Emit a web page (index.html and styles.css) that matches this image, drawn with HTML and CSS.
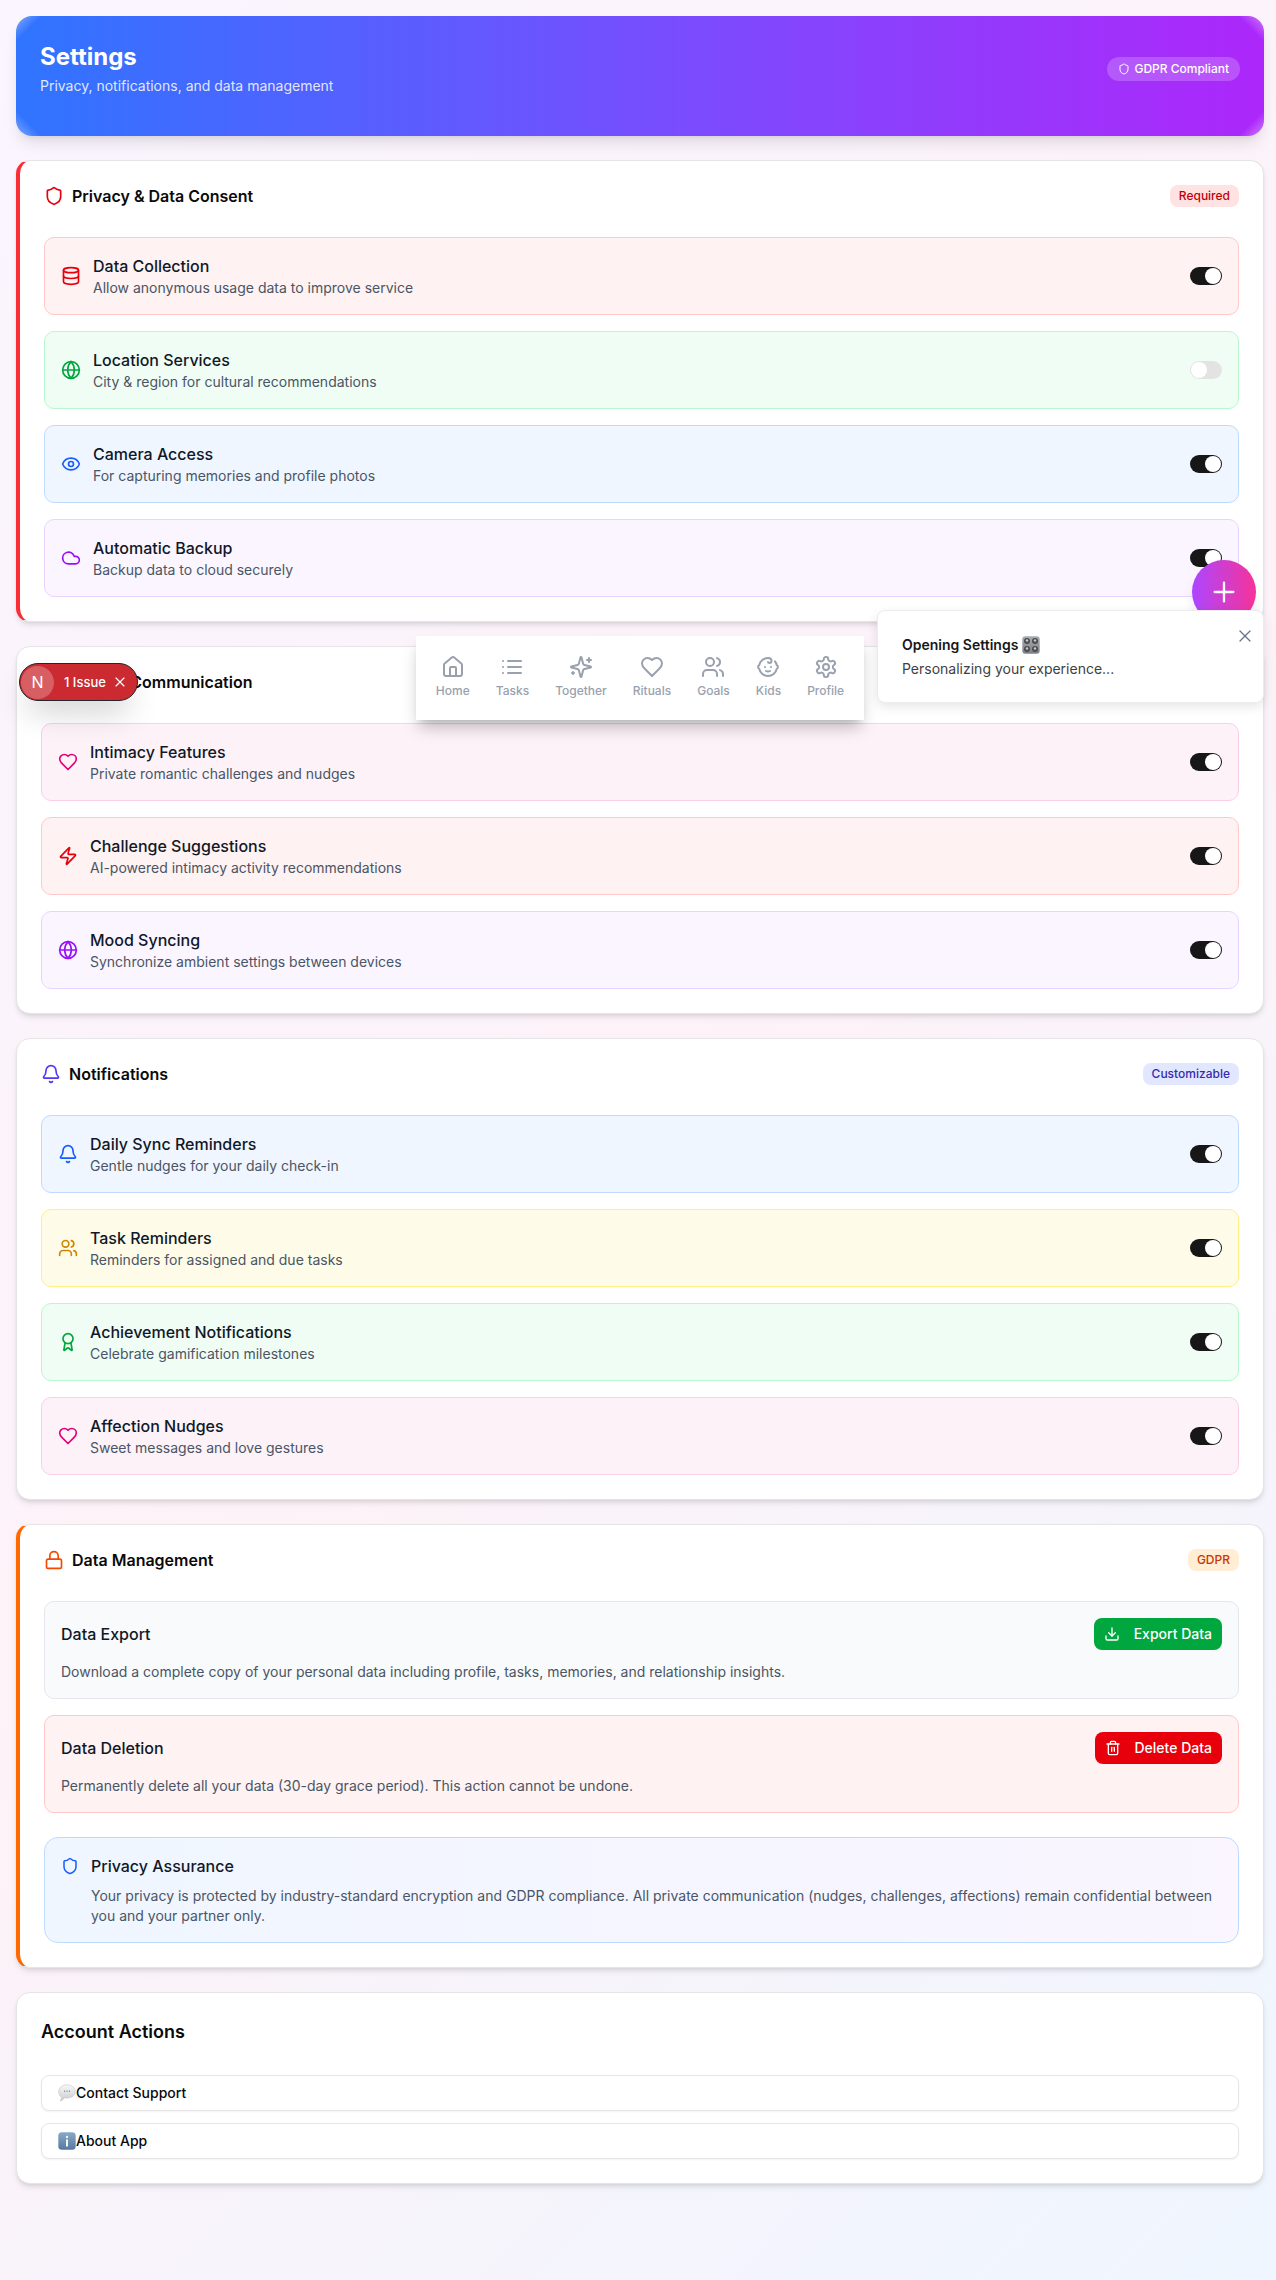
FILE: index.html
```html
<!DOCTYPE html>
<html lang="en">
  <head>
    <meta charset="UTF-8" />
    <meta name="viewport" content="width=device-width, initial-scale=1.0" />
    <title>Settings</title>
    <link rel="stylesheet" href="styles.css">
  </head>
  <body>
    <svg class="sprite" aria-hidden="true">
      <symbol id="i-shield" viewBox="0 0 24 24"><path d="M20 13c0 5-3.5 7.5-7.66 8.95a1 1 0 0 1-.67-.01C7.5 20.5 4 18 4 13V6a1 1 0 0 1 1-1c2 0 4.5-1.2 6.24-2.72a1.17 1.17 0 0 1 1.52 0C14.51 3.81 17 5 19 5a1 1 0 0 1 1 1z"/></symbol>
      <symbol id="i-database" viewBox="0 0 24 24"><ellipse cx="12" cy="5" rx="9" ry="3"/><path d="M3 5V19A9 3 0 0 0 21 19V5"/><path d="M3 12A9 3 0 0 0 21 12"/></symbol>
      <symbol id="i-globe" viewBox="0 0 24 24"><circle cx="12" cy="12" r="10"/><path d="M12 2a14.5 14.5 0 0 0 0 20 14.5 14.5 0 0 0 0-20"/><path d="M2 12h20"/></symbol>
      <symbol id="i-eye" viewBox="0 0 24 24"><path d="M2.062 12.348a1 1 0 0 1 0-.696 10.75 10.75 0 0 1 19.876 0 1 1 0 0 1 0 .696 10.75 10.75 0 0 1-19.876 0"/><circle cx="12" cy="12" r="3"/></symbol>
      <symbol id="i-cloud" viewBox="0 0 24 24"><path d="M17.5 19H9a7 7 0 1 1 6.71-9h1.79a4.5 4.5 0 1 1 0 9Z"/></symbol>
      <symbol id="i-heart" viewBox="0 0 24 24"><path d="M19 14c1.49-1.46 3-3.21 3-5.5A5.5 5.5 0 0 0 16.5 3c-1.76 0-3 .5-4.5 2-1.5-1.5-2.74-2-4.5-2A5.5 5.5 0 0 0 2 8.5c0 2.3 1.5 4.05 3 5.5l7 7Z"/></symbol>
      <symbol id="i-zap" viewBox="0 0 24 24"><path d="M4 14a1 1 0 0 1-.78-1.63l9.9-10.2a.5.5 0 0 1 .86.46l-1.92 6.02A1 1 0 0 0 13 10h7a1 1 0 0 1 .78 1.63l-9.9 10.2a.5.5 0 0 1-.86-.46l1.92-6.02A1 1 0 0 0 11 14z"/></symbol>
      <symbol id="i-bell" viewBox="0 0 24 24"><path d="M10.268 21a2 2 0 0 0 3.464 0"/><path d="M3.262 15.326A1 1 0 0 0 4 17h16a1 1 0 0 0 .74-1.673C19.41 13.956 18 12.499 18 8A6 6 0 0 0 6 8c0 4.499-1.411 5.956-2.738 7.326"/></symbol>
      <symbol id="i-users" viewBox="0 0 24 24"><path d="M16 21v-2a4 4 0 0 0-4-4H6a4 4 0 0 0-4 4v2"/><circle cx="9" cy="7" r="4"/><path d="M22 21v-2a4 4 0 0 0-3-3.87"/><path d="M16 3.13a4 4 0 0 1 0 7.75"/></symbol>
      <symbol id="i-award" viewBox="0 0 24 24"><path d="m15.477 12.89 1.515 8.526a.5.5 0 0 1-.81.47l-3.58-2.687a1 1 0 0 0-1.197 0l-3.586 2.686a.5.5 0 0 1-.81-.469l1.514-8.526"/><circle cx="12" cy="8" r="6"/></symbol>
      <symbol id="i-lock" viewBox="0 0 24 24"><rect width="18" height="11" x="3" y="11" rx="2" ry="2"/><path d="M7 11V7a5 5 0 0 1 10 0v4"/></symbol>
      <symbol id="i-download" viewBox="0 0 24 24"><path d="M21 15v4a2 2 0 0 1-2 2H5a2 2 0 0 1-2-2v-4"/><path d="m7 10 5 5 5-5"/><path d="M12 15V3"/></symbol>
      <symbol id="i-trash" viewBox="0 0 24 24"><path d="M3 6h18"/><path d="M19 6v14c0 1-1 2-2 2H7c-1 0-2-1-2-2V6"/><path d="M8 6V4c0-1 1-2 2-2h4c1 0 2 1 2 2v2"/><path d="M10 11v6"/><path d="M14 11v6"/></symbol>
      <symbol id="i-home" viewBox="0 0 24 24"><path d="M15 21v-8a1 1 0 0 0-1-1h-4a1 1 0 0 0-1 1v8"/><path d="M3 10a2 2 0 0 1 .709-1.528l7-5.999a2 2 0 0 1 2.582 0l7 5.999A2 2 0 0 1 21 10v9a2 2 0 0 1-2 2H5a2 2 0 0 1-2-2z"/></symbol>
      <symbol id="i-list" viewBox="0 0 24 24"><path d="M3 12h.01"/><path d="M3 18h.01"/><path d="M3 6h.01"/><path d="M8 12h13"/><path d="M8 18h13"/><path d="M8 6h13"/></symbol>
      <symbol id="i-sparkles" viewBox="0 0 24 24"><path d="M9.937 15.5A2 2 0 0 0 8.5 14.063l-6.135-1.582a.5.5 0 0 1 0-.962L8.5 9.936A2 2 0 0 0 9.937 8.5l1.582-6.135a.5.5 0 0 1 .963 0L14.063 8.5A2 2 0 0 0 15.5 9.937l6.135 1.581a.5.5 0 0 1 0 .964L15.5 14.063a2 2 0 0 0-1.437 1.437l-1.582 6.135a.5.5 0 0 1-.963 0z"/><path d="M20 3v4"/><path d="M22 5h-4"/><path d="M4 17v2"/><path d="M5 18H3"/></symbol>
      <symbol id="i-baby" viewBox="0 0 24 24"><path d="M9 12h.01"/><path d="M15 12h.01"/><path d="M10 16c.5.3 1.2.5 2 .5s1.5-.2 2-.5"/><path d="M19 6.3a9 9 0 0 1 1.8 3.9 2 2 0 0 1 0 3.6 9 9 0 0 1-17.6 0 2 2 0 0 1 0-3.6A9 9 0 0 1 12 3c2 0 3.5 1.1 3.5 2.5s-.9 2.5-2 2.5c-.8 0-1.5-.4-1.5-1"/></symbol>
      <symbol id="i-settings" viewBox="0 0 24 24"><path d="M12.22 2h-.44a2 2 0 0 0-2 2v.18a2 2 0 0 1-1 1.73l-.43.25a2 2 0 0 1-2 0l-.15-.08a2 2 0 0 0-2.73.73l-.22.38a2 2 0 0 0 .73 2.73l.15.1a2 2 0 0 1 1 1.72v.51a2 2 0 0 1-1 1.74l-.15.09a2 2 0 0 0-.73 2.73l.22.38a2 2 0 0 0 2.73.73l.15-.08a2 2 0 0 1 2 0l.43.25a2 2 0 0 1 1 1.73V20a2 2 0 0 0 2 2h.44a2 2 0 0 0 2-2v-.18a2 2 0 0 1 1-1.73l.43-.25a2 2 0 0 1 2 0l.15.08a2 2 0 0 0 2.73-.73l.22-.39a2 2 0 0 0-.73-2.73l-.15-.08a2 2 0 0 1-1-1.74v-.5a2 2 0 0 1 1-1.74l.15-.09a2 2 0 0 0 .73-2.73l-.22-.38a2 2 0 0 0-2.73-.73l-.15.08a2 2 0 0 1-2 0l-.43-.25a2 2 0 0 1-1-1.73V4a2 2 0 0 0-2-2z"/><circle cx="12" cy="12" r="3"/></symbol>
      <symbol id="i-x" viewBox="0 0 24 24"><path d="M18 6 6 18"/><path d="m6 6 12 12"/></symbol>
      <symbol id="i-plus" viewBox="0 0 24 24"><path d="M5 12h14"/><path d="M12 5v14"/></symbol>
    </svg>

    <main class="page">
      <header class="hero">
        <div>
          <h1>Settings</h1>
          <p>Privacy, notifications, and data management</p>
        </div>
        <span class="hero-pill"><svg class="icon icon-12"><use href="#i-shield"/></svg>GDPR Compliant</span>
      </header>

      <section class="card card-red">
        <div class="card-head">
          <h2><svg class="icon c-red"><use href="#i-shield"/></svg>Privacy &amp; Data Consent</h2>
          <span class="badge badge-red">Required</span>
        </div>
        <div class="rows">
          <div class="row row-red">
            <svg class="icon c-red"><use href="#i-database"/></svg>
            <div class="row-text"><h3>Data Collection</h3><p>Allow anonymous usage data to improve service</p></div>
            <span class="toggle on"></span>
          </div>
          <div class="row row-green">
            <svg class="icon c-green"><use href="#i-globe"/></svg>
            <div class="row-text"><h3>Location Services</h3><p>City &amp; region for cultural recommendations</p></div>
            <span class="toggle"></span>
          </div>
          <div class="row row-blue">
            <svg class="icon c-blue"><use href="#i-eye"/></svg>
            <div class="row-text"><h3>Camera Access</h3><p>For capturing memories and profile photos</p></div>
            <span class="toggle on"></span>
          </div>
          <div class="row row-purple">
            <svg class="icon c-purple"><use href="#i-cloud"/></svg>
            <div class="row-text"><h3>Automatic Backup</h3><p>Backup data to cloud securely</p></div>
            <span class="toggle on"></span>
          </div>
        </div>
      </section>

      <section class="card">
        <div class="card-head">
          <h2><svg class="icon c-pink"><use href="#i-heart"/></svg>Partner Communication</h2>
        </div>
        <div class="rows">
          <div class="row row-pink">
            <svg class="icon c-pink"><use href="#i-heart"/></svg>
            <div class="row-text"><h3>Intimacy Features</h3><p>Private romantic challenges and nudges</p></div>
            <span class="toggle on"></span>
          </div>
          <div class="row row-red">
            <svg class="icon c-red"><use href="#i-zap"/></svg>
            <div class="row-text"><h3>Challenge Suggestions</h3><p>AI-powered intimacy activity recommendations</p></div>
            <span class="toggle on"></span>
          </div>
          <div class="row row-purple">
            <svg class="icon c-purple"><use href="#i-globe"/></svg>
            <div class="row-text"><h3>Mood Syncing</h3><p>Synchronize ambient settings between devices</p></div>
            <span class="toggle on"></span>
          </div>
        </div>
      </section>

      <section class="card">
        <div class="card-head">
          <h2><svg class="icon c-indigo"><use href="#i-bell"/></svg>Notifications</h2>
          <span class="badge badge-indigo">Customizable</span>
        </div>
        <div class="rows">
          <div class="row row-blue">
            <svg class="icon c-blue"><use href="#i-bell"/></svg>
            <div class="row-text"><h3>Daily Sync Reminders</h3><p>Gentle nudges for your daily check-in</p></div>
            <span class="toggle on"></span>
          </div>
          <div class="row row-yellow">
            <svg class="icon c-yellow"><use href="#i-users"/></svg>
            <div class="row-text"><h3>Task Reminders</h3><p>Reminders for assigned and due tasks</p></div>
            <span class="toggle on"></span>
          </div>
          <div class="row row-green">
            <svg class="icon c-green"><use href="#i-award"/></svg>
            <div class="row-text"><h3>Achievement Notifications</h3><p>Celebrate gamification milestones</p></div>
            <span class="toggle on"></span>
          </div>
          <div class="row row-pink">
            <svg class="icon c-pink"><use href="#i-heart"/></svg>
            <div class="row-text"><h3>Affection Nudges</h3><p>Sweet messages and love gestures</p></div>
            <span class="toggle on"></span>
          </div>
        </div>
      </section>

      <section class="card card-orange">
        <div class="card-head">
          <h2><svg class="icon c-orange"><use href="#i-lock"/></svg>Data Management</h2>
          <span class="badge badge-orange">GDPR</span>
        </div>
        <div class="rows">
          <div class="data-box row-gray">
            <div class="data-top">
              <h3>Data Export</h3>
              <button class="btn btn-green"><svg class="icon icon-16"><use href="#i-download"/></svg>Export Data</button>
            </div>
            <p>Download a complete copy of your personal data including profile, tasks, memories, and relationship insights.</p>
          </div>
          <div class="data-box row-red">
            <div class="data-top">
              <h3>Data Deletion</h3>
              <button class="btn btn-red"><svg class="icon icon-16"><use href="#i-trash"/></svg>Delete Data</button>
            </div>
            <p>Permanently delete all your data (30-day grace period). This action cannot be undone.</p>
          </div>
        </div>
        <div class="assurance">
          <svg class="icon icon-18 c-blue"><use href="#i-shield"/></svg>
          <div>
            <h3>Privacy Assurance</h3>
            <p>Your privacy is protected by industry-standard encryption and GDPR compliance. All private communication (nudges, challenges, affections) remain confidential between you and your partner only.</p>
          </div>
        </div>
      </section>

      <section class="card">
        <h2 class="actions-title">Account Actions</h2>
        <div class="actions">
          <button class="action">
            <svg class="emoji" viewBox="0 0 18 18">
              <defs><linearGradient id="bubble" x1="0" y1="0" x2="0" y2="1"><stop offset="0" stop-color="#f7f8f9"/><stop offset="1" stop-color="#c9ccd0"/></linearGradient></defs>
              <path d="M9 .8c4.600 0 8.300 2.900 8.300 6.600S13.600 14 9 14c-.9 0-1.700-.1-2.500-.3-1 1.600-2.600 2.900-4.400 3.400.9-1.100 1.300-2.400 1.200-4C1.700 11.900.7 9.800.7 7.400.7 3.700 4.400.8 9 .8z" fill="url(#bubble)" stroke="#b5b8bc" stroke-width=".5"/>
              <circle cx="6.600" cy="7.200" r=".6" fill="#6b7075"/><circle cx="9" cy="7.200" r=".6" fill="#6b7075"/><circle cx="11.400" cy="7.200" r=".6" fill="#6b7075"/>
            </svg>Contact Support
          </button>
          <button class="action">
            <svg class="emoji" viewBox="0 0 18 18">
              <defs><linearGradient id="info" x1="0" y1="0" x2="0" y2="1"><stop offset="0" stop-color="#8aa9c9"/><stop offset="1" stop-color="#55799f"/></linearGradient></defs>
              <rect x=".3" y=".3" width="17.400" height="17.400" rx="3.500" fill="url(#info)"/>
              <circle cx="9" cy="5" r="1.200" fill="#f3f6f9"/><rect x="8" y="7.500" width="2" height="7" fill="#f3f6f9"/>
            </svg>About App
          </button>
        </div>
      </section>
    </main>

    <!-- floating things over the page -->
    <div class="dev-badge">
      <span class="dev-logo">N</span>
      <span class="dev-label">1 Issue</span>
      <svg class="icon dev-close"><use href="#i-x"/></svg>
    </div>

    <nav class="dock">
      <a class="dock-item"><svg class="icon icon-24"><use href="#i-home"/></svg>Home</a>
      <a class="dock-item"><svg class="icon icon-24"><use href="#i-list"/></svg>Tasks</a>
      <a class="dock-item"><svg class="icon icon-24"><use href="#i-sparkles"/></svg>Together</a>
      <a class="dock-item"><svg class="icon icon-24"><use href="#i-heart"/></svg>Rituals</a>
      <a class="dock-item"><svg class="icon icon-24"><use href="#i-users"/></svg>Goals</a>
      <a class="dock-item"><svg class="icon icon-24"><use href="#i-baby"/></svg>Kids</a>
      <a class="dock-item"><svg class="icon icon-24"><use href="#i-settings"/></svg>Profile</a>
    </nav>

    <button class="fab"><svg class="icon fab-plus"><use href="#i-plus"/></svg></button>

    <div class="toast">
      <div class="toast-title">Opening Settings
        <svg class="emoji" viewBox="0 0 18 18">
          <defs><linearGradient id="knobs" x1="0" y1="0" x2="0" y2="1"><stop offset="0" stop-color="#a9acaf"/><stop offset="1" stop-color="#7d8084"/></linearGradient></defs>
          <rect x=".3" y=".3" width="17.400" height="17.400" rx="3" fill="url(#knobs)"/>
          <circle cx="5" cy="5" r="3" fill="#4a4d51"/><circle cx="13" cy="5" r="3" fill="#4a4d51"/><circle cx="5" cy="13" r="3" fill="#4a4d51"/><circle cx="13" cy="13" r="3" fill="#4a4d51"/>
          <circle cx="5" cy="4.500" r="1.200" fill="#c7c9cb"/><circle cx="13" cy="4.500" r="1.200" fill="#c7c9cb"/><circle cx="5" cy="12.500" r="1.200" fill="#c7c9cb"/><circle cx="13" cy="12.500" r="1.200" fill="#c7c9cb"/>
        </svg>
      </div>
      <div class="toast-text">Personalizing your experience...</div>
      <svg class="icon toast-close"><use href="#i-x"/></svg>
    </div>
  </body>
</html>
```

FILE: styles.css
```css
* {
  box-sizing: border-box;
}

body {
  margin: 0;
  min-height: 2280px;
  position: relative;
  font-family: Inter, "Liberation Sans", sans-serif;
  color: #0a0a0a;
  background: linear-gradient(135deg, #faf5ff 0%, #fdf2f8 50%, #eff6ff 100%);
}

h1,
h2,
h3,
p {
  margin: 0;
}

.sprite {
  display: none;
}

.icon {
  width: 20px;
  height: 20px;
  flex: none;
  fill: none;
  stroke: currentColor;
  stroke-width: 2;
  stroke-linecap: round;
  stroke-linejoin: round;
}

.icon-12 {
  width: 12px;
  height: 12px;
}

.icon-16 {
  width: 16px;
  height: 16px;
}

.icon-18 {
  width: 18px;
  height: 18px;
}

.icon-24 {
  width: 24px;
  height: 24px;
}

.c-red { color: #e7000b; }
.c-green { color: #00a63e; }
.c-blue { color: #155dfc; }
.c-purple { color: #9810fa; }
.c-pink { color: #e60076; }
.c-yellow { color: #d08700; }
.c-orange { color: #f54900; }
.c-indigo { color: #4f39f6; }

.page {
  display: flex;
  flex-direction: column;
  gap: 24px;
  padding: 16px 12px 96px 16px;
}

/* top banner */
.hero {
  display: flex;
  align-items: center;
  justify-content: space-between;
  padding: 25px 24px 40px;
  border-radius: 16px;
  color: #fff;
  /* the corners catch a soft light */
  background:
    linear-gradient(135deg, rgba(255, 255, 255, 0.4), transparent 50%) 0 0 / 26px 26px no-repeat,
    linear-gradient(225deg, rgba(255, 255, 255, 0.4), transparent 50%) 100% 0 / 26px 26px no-repeat,
    linear-gradient(45deg, rgba(255, 255, 255, 0.4), transparent 50%) 0 100% / 26px 26px no-repeat,
    linear-gradient(315deg, rgba(255, 255, 255, 0.4), transparent 50%) 100% 100% / 26px 26px no-repeat,
    linear-gradient(90deg, #2f74ff 0%, #7c4bfd 55%, #ad27fa 100%);
  box-shadow: 0 10px 15px -3px rgba(0, 0, 0, 0.1), 0 4px 6px -4px rgba(0, 0, 0, 0.1);
}

.hero h1 {
  font-size: 24px;
  line-height: 32px;
  font-weight: 700;
}

.hero p {
  margin-top: 3px;
  font-size: 14px;
  line-height: 20px;
  color: rgba(255, 255, 255, 0.85);
}

.hero-pill {
  display: flex;
  align-items: center;
  gap: 4px;
  padding: 4px 11px;
  border-radius: 999px;
  background: rgba(255, 255, 255, 0.2);
  font-size: 12px;
  line-height: 16px;
  font-weight: 500;
}

/* cards */
.card {
  padding: 24px;
  background: #fff;
  border: 1px solid #e5e5e5;
  border-radius: 14px;
  box-shadow: 0 4px 6px -1px rgba(0, 0, 0, 0.1), 0 2px 4px -2px rgba(0, 0, 0, 0.1);
}

.card-red {
  border-left: 4px solid #fb2c36;
}

.card-orange {
  border-left: 4px solid #ff6900;
}

.card-head {
  display: flex;
  align-items: center;
  justify-content: space-between;
  height: 22px;
  margin-bottom: 30px;
}

.card-head h2 {
  display: flex;
  align-items: center;
  gap: 8px;
  font-size: 16px;
  line-height: 22px;
  font-weight: 600;
}

.badge {
  padding: 2px 8px;
  border: 1px solid transparent;
  border-radius: 8px;
  font-size: 12px;
  line-height: 16px;
  font-weight: 500;
}

.badge-red { background: #ffe2e2; color: #c10007; }
.badge-indigo { background: #e0e7ff; color: #372aac; }
.badge-orange { background: #ffedd4; color: #ca3500; }

.rows {
  display: flex;
  flex-direction: column;
  gap: 16px;
}

.row,
.data-box {
  padding: 16px;
  border-width: 1px;
  border-style: solid;
  border-radius: 10px;
}

.row {
  display: flex;
  align-items: center;
  gap: 12px;
}

.row-red { background: #fef2f2; border-color: #ffc9c9; }
.row-green { background: #f0fdf4; border-color: #b9f8cf; }
.row-blue { background: #eff6ff; border-color: #bedbff; }
.row-purple { background: #faf5ff; border-color: #e9d4ff; }
.row-pink { background: #fdf2f8; border-color: #fccee8; }
.row-yellow { background: #fefce8; border-color: #fff085; }
.row-gray { background: #f9fafb; border-color: #e5e7eb; }

.row-text {
  flex: 1;
}

h3 {
  font-size: 16px;
  line-height: 24px;
  font-weight: 500;
  color: #101828;
}

.row p,
.data-box p,
.assurance p {
  font-size: 14px;
  line-height: 20px;
  color: #4a5565;
}

.toggle {
  position: relative;
  width: 32px;
  height: 18px;
  flex: none;
  border-radius: 9px;
  background: #e3e3e3;
}

.toggle::after {
  content: "";
  position: absolute;
  top: 1px;
  left: 1px;
  width: 16px;
  height: 16px;
  border-radius: 50%;
  background: #fff;
}

.toggle.on {
  background: #171717;
}

.toggle.on::after {
  left: 15px;
}

/* data management */
.data-top {
  display: flex;
  align-items: center;
  justify-content: space-between;
  margin-bottom: 12px;
}

.btn {
  display: flex;
  align-items: center;
  gap: 14px;
  height: 32px;
  padding: 0 10px;
  border: 0;
  border-radius: 8px;
  color: #fff;
  font: 500 14px/20px Inter, "Liberation Sans", sans-serif;
}

.btn-green { background: #00a63e; }
.btn-red { background: #e7000b; }

.assurance {
  display: flex;
  gap: 12px;
  margin-top: 24px;
  padding: 16px;
  border: 1px solid #bedbff;
  border-radius: 14px;
  background: linear-gradient(90deg, #eff6ff, #faf5ff);
}

.assurance .icon {
  margin-top: 3px;
}

.assurance p {
  margin-top: 8px;
}

/* account actions */
.actions-title {
  font-size: 18px;
  line-height: 28px;
  font-weight: 600;
  padding-top: 1px;
  margin-bottom: 29px;
}

.actions {
  display: flex;
  flex-direction: column;
  gap: 12px;
}

.action {
  display: flex;
  align-items: center;
  height: 36px;
  padding: 0 16px;
  background: #fff;
  border: 1px solid #e5e5e5;
  border-radius: 8px;
  color: #0a0a0a;
  font: 500 14px/20px Inter, "Liberation Sans", sans-serif;
  box-shadow: 0 1px 2px rgba(0, 0, 0, 0.05);
}

.emoji {
  width: 18px;
  height: 18px;
  flex: none;
}

/* floating */
.dev-badge {
  position: absolute;
  left: 19px;
  top: 663px;
  display: flex;
  align-items: center;
  width: 119px;
  height: 38px;
  padding-left: 1px;
  border: 1px solid #23272d;
  border-radius: 19px;
  background: #ca2a30;
  color: #fff;
  box-shadow: 0 16px 32px -8px rgba(0, 0, 0, 0.24);
}

.dev-logo {
  display: flex;
  align-items: center;
  justify-content: center;
  width: 33px;
  height: 33px;
  border-radius: 50%;
  background: rgba(255, 255, 255, 0.25);
  font-size: 16px;
  font-weight: 400;
}

.dev-label {
  margin-left: 10px;
  font-size: 13px;
  font-weight: 500;
  line-height: 20px;
}

.dev-close {
  width: 16px;
  height: 16px;
  margin-left: 6px;
  stroke-width: 1.75;
}

.dock {
  position: absolute;
  left: 416px;
  top: 636px;
  display: flex;
  justify-content: center;
  gap: 2px;
  width: 448px;
  height: 84px;
  padding-top: 19px;
  background: #fff;
  box-shadow: 0 10px 15px -3px rgba(0, 0, 0, 0.25), 0 4px 6px -4px rgba(0, 0, 0, 0.15);
}

.dock-item {
  display: flex;
  flex-direction: column;
  align-items: center;
  gap: 4px;
  padding: 0 12px;
  font-size: 12px;
  line-height: 16px;
  font-weight: 500;
  color: #99a1af;
}

.fab {
  position: absolute;
  left: 1192px;
  top: 560px;
  display: flex;
  align-items: center;
  justify-content: center;
  width: 64px;
  height: 64px;
  padding: 0;
  border: 0;
  border-radius: 50%;
  color: #fff;
  background: linear-gradient(90deg, #ad46ff, #f6339a);
  box-shadow: 0 10px 15px -3px rgba(0, 0, 0, 0.1);
}

.fab-plus {
  width: 32px;
  height: 32px;
  stroke-width: 1.75;
}

.toast {
  position: absolute;
  left: 877px;
  top: 610px;
  width: 387px;
  height: 93px;
  padding: 24px;
  background: #fff;
  border: 1px solid #ebebf0;
  border-radius: 8px;
  color: #171717;
  box-shadow: 0 4px 12px rgba(0, 0, 0, 0.1);
}

.toast-title {
  display: flex;
  align-items: center;
  gap: 4px;
  height: 20px;
  font-size: 14px;
  line-height: 20px;
  font-weight: 600;
}

.toast-text {
  margin-top: 4px;
  font-size: 14px;
  line-height: 20px;
  color: #3f3f3f;
}

.toast-close {
  position: absolute;
  top: 15px;
  right: 8px;
  stroke-width: 1.5;
  color: #62748e;
}
```
